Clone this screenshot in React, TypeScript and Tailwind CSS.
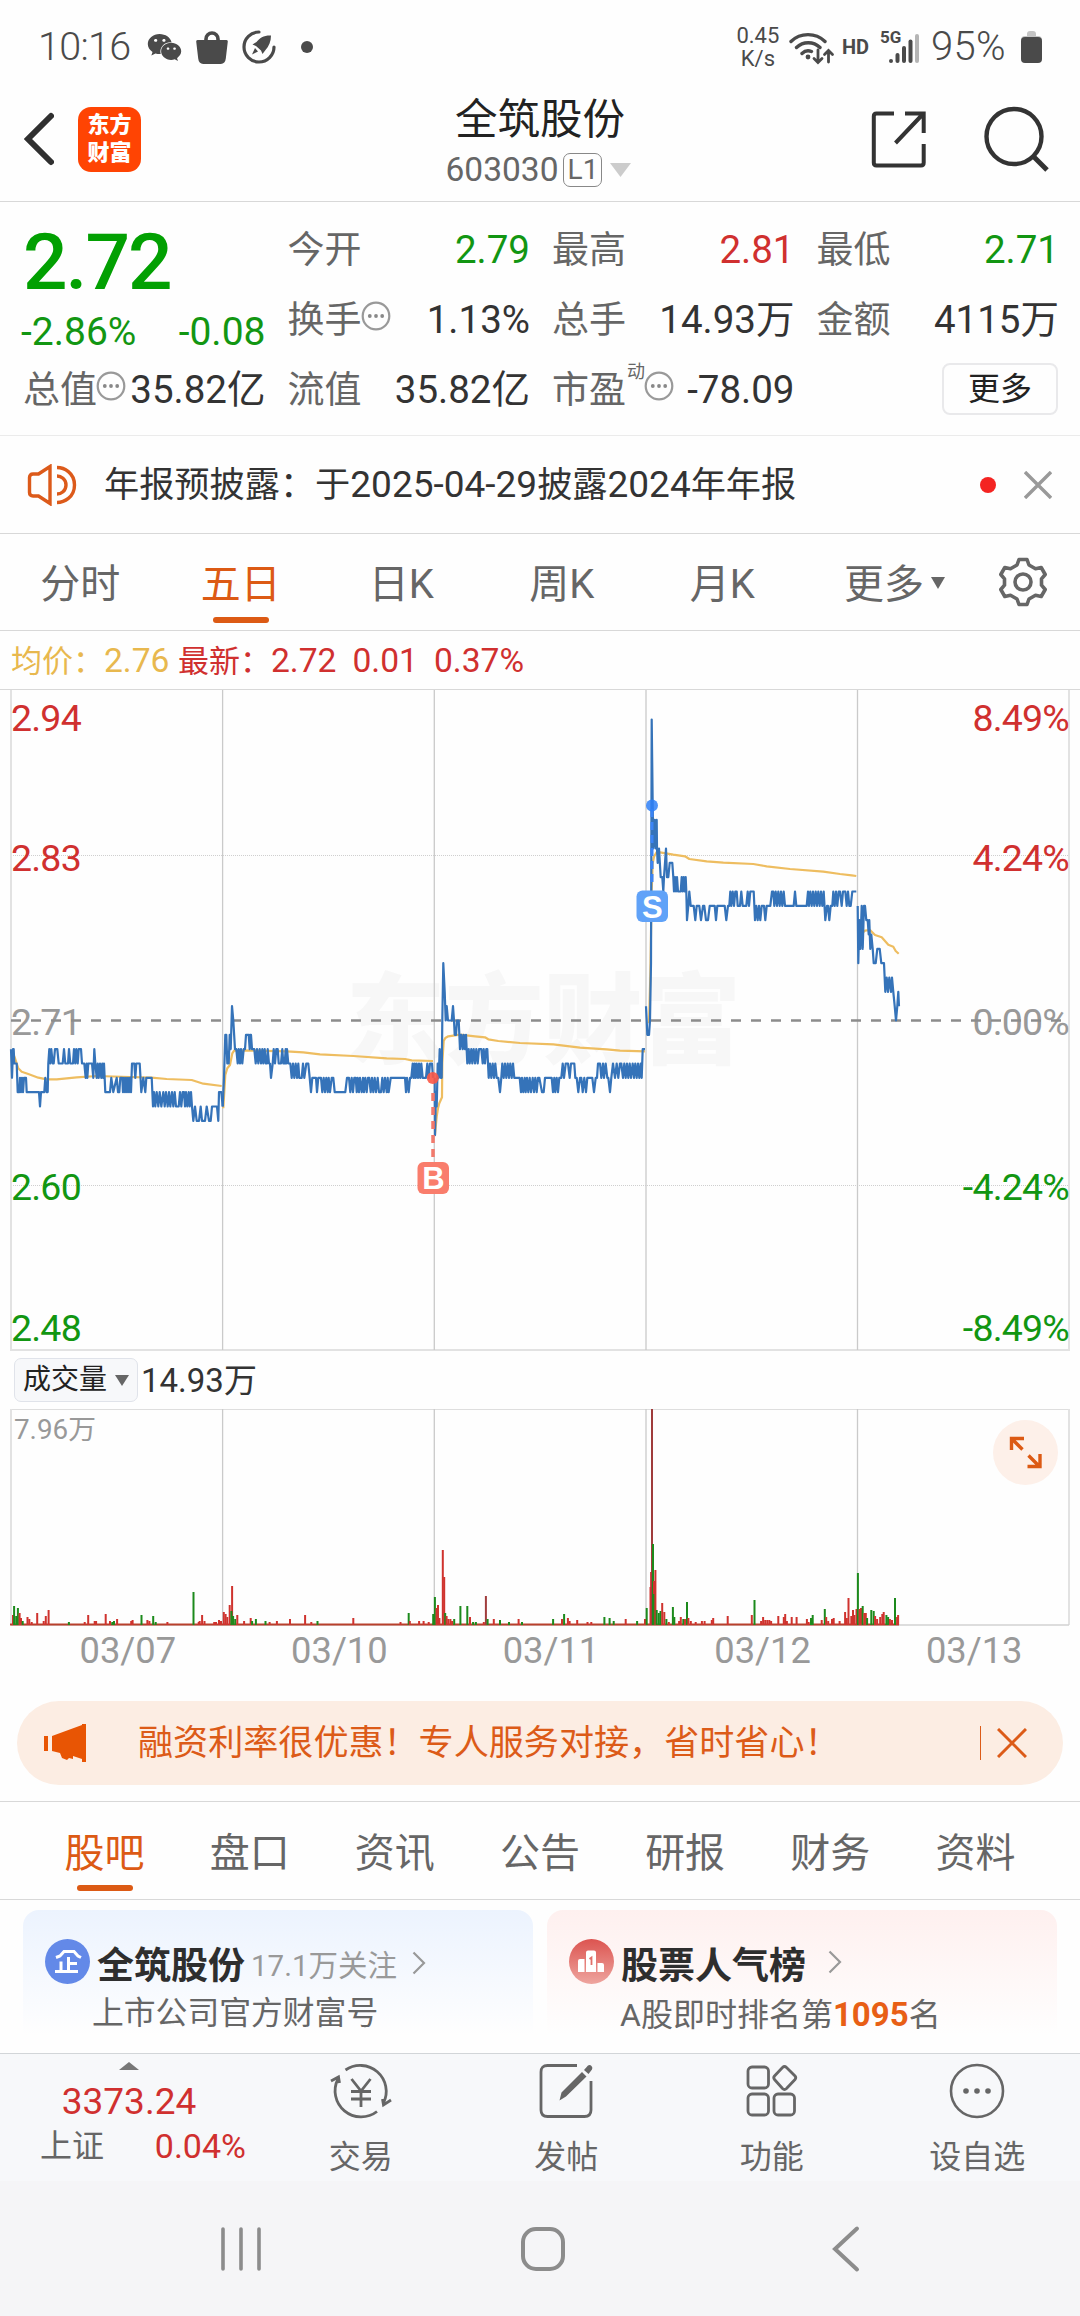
import React from 'react';
import { FaWeixin } from 'react-icons/fa';

const RED = '#d0302f';
const GREEN = '#129612';

// Price steps: pairs of "x level", x in thirds of a pixel, one level = 0.01 below 2.71
const PRICE_RUNS: { offset: number; data: string }[] = [
  {
    offset: 0,
    data: '33 2 36 4 39 2 41 2 43 3 50 3 53 5 58 5 60 4 63 5 66 4 69 5 72 4 78 4 80 5 117 5 120 6 123 5 133 5 136 4 140 5 143 5 145 3 148 2 151 3 154 2 158 3 161 3 165 2 172 2 176 3 188 3 192 2 196 3 204 3 207 2 211 3 219 3 222 2 226 3 229 2 233 3 236 2 243 2 246 3 253 3 257 4 260 3 262 4 265 3 276 3 280 4 283 2 286 3 290 4 293 3 296 4 300 3 304 4 307 3 310 4 312 3 316 5 320 5 330 5 334 4 340 5 350 4 354 5 358 5 361 4 367 4 369 5 372 4 375 5 378 4 381 5 384 4 387 5 390 4 393 5 396 3 403 3 406 4 409 3 419 3 424 5 430 4 436 5 439 4 455 4 459 6 462 5 466 6 470 5 475 6 479 5 484 6 490 5 494 6 498 5 503 6 507 5 511 6 516 5 520 6 524 5 528 6 536 6 540 5 544 6 548 5 552 5 555 6 558 5 562 6 566 5 569 6 573 5 576 6 580 7 585 6 590 7 597 7 602 6 606 7 615 7 620 6 627 7 632 7 636 6 651 6 655 7 657 5 664 5 668 6',
  },
  {
    offset: 0,
    data: '668 6 672 4 676 1 679 1 682 3 686 3 689 1 692 2 696 -1 700 0 705 2 709 2 713 3 716 2 720 3 723 2 727 3 731 2 735 2 738 1 746 1 749 2 750 1 753 1 756 2 763 2 767 3 771 2 775 3 779 2 783 3 787 2 790 3 794 2 797 3 801 3 803 2 807 3 810 3 813 4 818 3 821 2 825 3 829 2 833 2 836 3 843 3 847 2 850 3 854 3 857 2 859 3 861 2 865 3 871 3 875 4 879 3 883 4 887 3 891 4 895 3 898 4 905 4 909 3 913 4 919 3 925 3 929 4 933 5 937 4 948 4 951 5 955 4 963 4 967 5 971 4 975 5 979 4 983 5 986 4 990 5 995 4 1000 4 1004 5 1036 5 1041 4 1047 4 1051 5 1055 4 1059 5 1063 4 1067 4 1070 5 1073 4 1077 5 1080 4 1085 5 1089 4 1092 5 1096 4 1100 5 1104 4 1108 4 1112 5 1116 4 1120 5 1124 4 1128 5 1133 4 1137 5 1143 5 1147 4 1151 5 1155 4 1160 5 1163 4 1166 5 1172 4 1215 4 1218 5 1221 4 1226 5 1230 4 1234 4 1238 3 1241 4 1244 3 1247 4 1250 3 1254 4 1257 3 1261 4 1264 3 1268 4 1278 4 1282 3 1286 4 1290 3 1296 3 1299 4',
  },
  {
    offset: 1260,
    data: '44 4 45 8 48 5 50 6 53 3 56 4 59 2 62 4 65 4 67 0 70 -4 74 -2 77 0 80 -1 84 0 95 0 99 -1 102 0 104 1 108 1 111 0 116 0 120 2 124 1 128 2 131 1 135 2 138 1 142 3 146 2 149 3 154 2 157 3 161 2 165 3 169 2 173 3 177 2 184 2 188 3 191 2 195 3 199 2 202 2 206 4 210 3 214 4 218 3 222 4 226 3 230 4 235 4 240 5 244 4 247 3 251 4 255 3 259 4 263 3 267 4 271 3 275 4 279 3 283 4 299 4 303 5 306 4 310 5 314 4 317 5 321 4 325 5 329 4 333 5 338 4 342 5 346 4 350 5 354 4 358 4 366 5 371 5 375 4 395 4 399 5 403 4 406 5 410 4 414 5 418 4 424 4 428 3 432 4 437 3 444 3 449 4 453 3 463 3 466 4 470 4 475 5 480 4 484 4 488 5 493 4 498 5 502 4 517 4 522 5 527 4 531 4 534 3 540 3 544 4 549 3 552 4 557 3 562 4 565 4 570 5 574 4 579 3 585 4 590 3 595 4 600 3 604 3 609 4 613 3 617 4 621 3 625 4 629 3 633 4 638 3 642 4 646 3 650 4 654 3 658 4 662 3 665 4 668 2 675 2',
  },
  {
    offset: 1920,
    data: '18 -1 20 0 22 1 27 1 30 0 33 -4 35 -21 38 -15 40 -12 44 -14 47 -12 50 -14 51 -12 53 -11 57 -12 62 -10 67 -10 70 -9 72 -10 75 -11 78 -12 81 -10 85 -10 89 -11 97 -11 100 -10 102 -9 105 -10 108 -9 111 -10 114 -9 122 -9 125 -10 128 -9 131 -10 134 -9 137 -10 139 -9 141 -7 145 -8 148 -9 152 -8 161 -8 166 -7 170 -8 178 -8 183 -7 189 -8 193 -8 198 -7 204 -7 209 -8 224 -8 228 -7 232 -8 254 -8 259 -7 264 -8 268 -8 271 -9 274 -8 278 -9 282 -8 286 -9 290 -9 293 -8 300 -8 304 -9 308 -8 319 -8 323 -9 327 -8 331 -9 341 -9 345 -7 349 -8 353 -7 357 -8 361 -7 365 -8 372 -8 376 -7 380 -8 391 -8 396 -9 400 -9 403 -8 407 -9 411 -8 415 -9 419 -8 423 -9 427 -8 431 -9 435 -8 461 -8 465 -9 469 -8 500 -8 504 -9 507 -8 511 -9 515 -8 519 -9 523 -8 527 -9 531 -8 535 -9 539 -8 543 -9 547 -8 551 -9 556 -7 561 -8 564 -8 568 -7 572 -8 577 -8 580 -9 584 -8 588 -9 592 -8 596 -9 600 -9 605 -8 609 -9 616 -9 620 -8 624 -9 628 -8 632 -8 637 -9 649 -9',
  },
  {
    offset: 1920,
    data: '653 -8 655 -4 658 -7 661 -5 665 -8 668 -5 672 -8 675 -8 679 -7 683 -7 686 -6 688 -7 691 -5 694 -6 698 -5 701 -4 707 -4 712 -5 719 -5 724 -4 732 -4 736 -2 740 -3 744 -2 748 -3 753 -2 756 -3 760 -2 764 -1 768 0 772 -1 775 -2 777 -1',
  },
];

// Average price: pairs of "x y", both in thirds of a pixel
const AVERAGE_RUNS: { dx: number; dy: number; data: string }[] = [
  { dx: 0, dy: 271, data: '36 270 45 295 55 325 65 335 85 342 115 353 140 358 170 358 230 352 290 348 390 351 455 353 500 357 575 360 610 371 665 378' },
  { dx: 0, dy: 271, data: '670 445 676 345 682 325 690 315 697 280 703 271 860 274 910 277 960 283 1060 288 1160 295 1215 297 1235 301 1299 303' },
  { dx: 420, dy: 1, data: '45 1333 50 1280 54 1255 58 1240 66 1222 67 1120 71 1053 76 1044 85 1039 120 1034 165 1039 195 1042 205 1048 235 1053 300 1059 400 1063 480 1073 560 1078 600 1082 675 1084' },
  { dx: 640, dy: 1, data: '27 1000 31 860 35 600 38 520 42 500 50 486 60 487 100 494 135 499 148 507 200 514 250 518 340 522 380 529 450 537 550 545 600 552 635 556 649 558' },
  { dx: 640, dy: 1, data: '655 700 660 735 675 722 690 720 705 735 725 742 745 764 760 770 767 783 776 791' },
];

// Volume bars: "colour x height"
const VOLUME_BARS =
  'r13 10,g14.1 19,g16.2 9,g17.9 17,r19.6 12,r21 7,g22.7 4,r27.5 8,r29.3 6,r31.7 3,r37.2 12,r43.7 4,r45.8 9,r48.6 15,g68.9 3,r84.7 3,r88.2 10,r94.7 4,r96.1 4,r105.7 11,r110 4,g112.3 3,g114 4,r117.1 6,r131.2 4,r132.6 5,g141.5 10,r147.4 5,r149.4 4,g153.2 9,g155.7 3,r167.4 3,g193.5 33,r198.7 3,r199.7 4,r202.1 10,r204.5 4,r214.2 3,r216 3,r219 5,r221 4,r223.8 13,r225.6 11,r227.3 8,r229.7 20,r232.1 39,g231.4 14,g233.1 9,g235.2 6,r237.3 10,r244.1 4,r250.7 7,g252.1 4,g255.9 6,g265.5 4,r269.6 3,r276.9 4,r290 6,r305.1 10,r311.3 3,g317.5 4,r353.3 7,r400.5 3,g408.7 12,r409.8 4,r419.1 4,r423.6 4,r428.7 3,g433.2 11,g434.9 28,r436.6 17,r438 20,r439.4 7,r442.8 75,r444.2 48,g445.2 12,r446.6 9,r448.3 6,r450.4 6,r452.1 4,g454.2 6,g460.4 19,g467.3 19,r470 8,g473.1 3,g475.9 3,r483.8 3,d485.9 29,g487.6 6,r493.8 6,g500 5,g509 3,r518.6 6,g522 3,g553.1 6,r562 6,g564.1 11,r567.9 7,r569.6 4,r577.2 5,r587.5 3,r591.3 3,g604.4 8,g609.6 7,g613.7 4,r625.7 6,g637.1 4,r645 6,g646.7 17,r650.5 38,r651.1 53,d652 216,g653 81,r654 44,g653.8 31,r655.4 55,g656.7 15,g658.8 12,g660.5 14,r662.2 22,r664.3 13,g666.4 6,r668.8 3,g672.9 18,g674.3 8,r679.1 4,r680.8 8,g683.3 6,r685 6,g687 23,r688.4 7,r690.8 4,r695.7 3,r701.9 4,r704.6 4,r711.8 5,r713.2 7,r727.7 9,r751.8 10,g754.5 25,r761.1 4,r763.1 8,r765.2 5,r767.3 5,r769.3 5,r771.1 4,r778.3 9,r783.8 8,r785.2 11,r786.9 4,r791.7 8,r796.6 8,r806.9 6,r808.6 3,g811 7,g812.7 10,r821.7 5,g824.8 16,r826.2 8,r828.2 4,r832 6,r833.7 7,r839.6 4,r845.1 13,r846.8 7,r848.5 27,r851.3 9,r853 15,r854.4 10,r856.5 16,g857.9 52,r859.6 16,r861 17,g862.7 19,r864.4 12,r865.8 12,g867.1 7,g871.3 15,g873.7 14,r875.1 9,r877.1 6,r880.2 8,r882.3 11,r883.7 13,g886.4 10,g888.1 8,r889.9 6,r892 5,g895 27,r897.1 8,r898.1 10'
    .split(',')
    .map((item) => {
      const [x, height] = item.slice(1).split(' ').map(Number);
      return { color: item[0] === 'g' ? '#1c8a1c' : item[0] === 'd' ? '#a03c3c' : '#cf332e', x, height };
    });

const DAY_LINES = [222.6, 434.3, 646, 857.5];

const toPoints = (data: string, map: (x: number, y: number) => [number, number]) => {
  const nums = data.split(' ').map(Number);
  const out: string[] = [];
  for (let i = 0; i < nums.length; i += 2) {
    out.push(map(nums[i], nums[i + 1]).map((n) => n.toFixed(1)).join(','));
  }
  return out.join(' ');
};

const StatusBar: React.FC = () => (
  <div className="flex h-[94px] items-center pl-[38px] pr-[38px] text-[#4a4a4a]">
    <span className="w-[109px] text-[39.5px] font-light leading-none tracking-[-0.7px]">10:16</span>
    <FaWeixin className="h-[35px] w-[35px]" />
    <svg className="ml-[14px] h-[34px] w-[32px]" viewBox="0 0 32 34">
      <path d="M10 13V9a6 6 0 0 1 12 0v4" fill="none" stroke="currentColor" strokeWidth="3.6" />
      <path d="M1.500 10h29q1.500 0 1.300 1.600l-2 17q-.6 5.400-5 5.400H7.200q-4.400 0-5-5.400l-2-17Q0 10 1.500 10z" fill="currentColor" />
    </svg>
    <svg className="ml-[14px] h-[34px] w-[34px]" viewBox="0 0 34 34" fill="none" stroke="currentColor" strokeWidth="3.2" strokeLinecap="round">
      <path d="M17 2A15 15 0 1 0 32 17" />
      <path d="M29 5.500c-7-.3-11.500 2.500-14.500 6.500l-4 2.500 3.500 1.500 5 4.500 1.500 3.500 3-4c3.500-4 5.500-8.500 5.500-14.500zM13 18l-3 6.500 6-3z" fill="currentColor" stroke="none" />
    </svg>
    <span className="ml-[25px] h-3 w-3 rounded-full bg-[#4a4a4a]" />
    <div className="ml-auto flex items-center">
      <div className="flex w-[44px] flex-col items-center text-[22px] leading-[23.500px]">
        <span>0.45</span>
        <span>K/s</span>
      </div>
      <svg className="ml-[9px] h-[36px] w-[46px]" viewBox="0 0 46 36" fill="none" stroke="currentColor" strokeWidth="3.4" strokeLinecap="round">
        <path d="M2 12.500A24.500 24.500 0 0 1 36 12.500M7.500 18.500a17 17 0 0 1 23.500 0M13 24.500a9 9 0 0 1 9.500-2" />
        <circle cx="19" cy="28" r="2.400" fill="currentColor" stroke="none" />
        <path d="M29 21v12M25 29.500l4 4 4-4M39.500 33V21.500M35.500 25.500l4-4 4 4" strokeWidth="2.800" />
      </svg>
      <span className="ml-[7px] text-[20px] font-bold leading-none">HD</span>
      <div className="ml-[11px] flex items-end">
        <span className="relative -top-[18px] w-[8px] text-[17px] font-bold leading-none">5G</span>
        <svg className="h-[34px] w-[32px]" viewBox="8 0 32 34">
          <rect x="9" y="29" width="4" height="4" rx="2" fill="currentColor" />
          <rect x="15.500" y="23" width="4" height="10" rx="2" fill="currentColor" />
          <rect x="22" y="16" width="4" height="17" rx="2" fill="currentColor" />
          <rect x="28.500" y="9.500" width="4" height="23.500" rx="2" fill="currentColor" />
          <rect x="35" y="4" width="4" height="29" rx="2" fill="#b5b5b5" />
        </svg>
      </div>
      <span className="ml-[11px] w-[90px] text-[40px] font-light leading-none tracking-[0.3px]">95%</span>
      <svg className="h-[32px] w-[21px]" viewBox="0 0 21 32">
        <path d="M6 5V3q0-3 3-3h3q3 0 3 3v2h2q4 0 4 4H0q0-4 4-4z" fill="#c4c4c4" />
        <rect y="6" width="21" height="26" rx="4" fill="currentColor" />
      </svg>
    </div>
  </div>
);

const Header: React.FC = () => (
  <header className="grid h-[108px] grid-cols-[1fr_auto_1fr] border-b border-[#d8d8d8]">
    <div className="flex items-center pb-[17px] pl-[24px]">
      <svg className="h-[54px] w-[30px]" viewBox="0 0 30 54" fill="none" stroke="#303030" strokeWidth="6" strokeLinecap="round">
        <path d="M27 4L4 27l23 23" />
      </svg>
      <div className="ml-[24px] flex h-[65px] w-[63px] flex-col items-center justify-center rounded-[13px] bg-[#ff4403] text-[22px] font-black leading-[28px] text-white">
        <span>东方</span>
        <span>财富</span>
      </div>
    </div>
    <div className="flex flex-col items-center pt-px">
      <h1 className="text-[42.5px] leading-[50px] text-[#222]">全筑股份</h1>
      <div className="mt-[8px] flex items-center text-[#666]">
        <span className="text-[33.5px] leading-[34px]">603030</span>
        <span className="ml-[5px] flex h-[34px] w-[39px] items-center justify-center rounded-[7px] border border-[#888] text-[28px] leading-none">L1</span>
        <svg className="ml-[8px] mr-[3px] h-[14px] w-[21px]" viewBox="0 0 21 14">
          <path d="M0 0h21L10.500 14z" fill="#ccc" />
        </svg>
      </div>
    </div>
    <div className="flex items-center justify-end pb-[18px] pr-[31px]">
      <svg className="h-[58px] w-[56px]" viewBox="0 0 56 58" fill="none" stroke="#333" strokeWidth="4">
        <path d="M23 3.500H5.500q-2.700 0-2.700 2.700v46.500q0 2.700 2.700 2.700H50q2.700 0 2.700-2.700V34M34 3.500h18.700V23M52 4L24.500 33" />
      </svg>
      <svg className="ml-[56px] h-[66px] w-[66px]" viewBox="0 0 66 66" fill="none" stroke="#333" strokeWidth="4.400">
        <circle cx="31" cy="30.500" r="27.500" />
        <path d="M51 51l13 13" strokeWidth="5" />
      </svg>
    </div>
  </header>
);

const InfoIcon: React.FC = () => (
  <svg className="relative -top-[4px] -ml-px h-[30px] w-[30px] shrink-0" viewBox="0 0 30 30">
    <circle cx="15" cy="15" r="13.300" fill="none" stroke="#999" strokeWidth="2.200" />
    <g fill="#888">
      <circle cx="8.800" cy="15" r="1.900" />
      <circle cx="15" cy="15" r="1.900" />
      <circle cx="21.200" cy="15" r="1.900" />
    </g>
  </svg>
);

interface StatProps {
  label: string;
  value?: string;
  valueClass?: string;
  sup?: string;
  info?: boolean;
}

const Stat: React.FC<StatProps> = ({ label, value, valueClass = 'text-[#333]', sup, info }) => (
  <div className="flex h-[70px] items-center whitespace-nowrap leading-none">
    <span className="text-[37px] text-[#666]">{label}</span>
    {sup && <span className="relative -top-[18px] ml-px text-[18px] text-[#666]">{sup}</span>}
    {info && <InfoIcon />}
    <span className={`-mr-[2px] ml-auto text-[38.5px] ${valueClass}`}>{value}</span>
  </div>
);

const Quote: React.FC = () => (
  <section className="grid h-[234px] grid-cols-4 gap-x-6 border-b border-[#ebebeb] pl-[23px] pr-[23px] pt-[13px]">
    <div>
      <div className="flex h-[94px] items-center text-[78.5px] font-medium leading-none tracking-[-2px] text-[#02a002]">2.72</div>
      <div className="-ml-[2px] -mr-[2px] flex h-[46px] items-center justify-between text-[39px] leading-none text-[#129612]">
        <span>-2.86%</span>
        <span>-0.08</span>
      </div>
      <Stat label="总值" value="35.82亿" info />
    </div>
    <div>
      <Stat label="今开" value="2.79" valueClass="text-[#129612]" />
      <Stat label="换手" value="1.13%" info />
      <Stat label="流值" value="35.82亿" />
    </div>
    <div>
      <Stat label="最高" value="2.81" valueClass="text-[#d0302f]" />
      <Stat label="总手" value="14.93万" />
      <Stat label="市盈" value="-78.09" sup="动" info />
    </div>
    <div>
      <Stat label="最低" value="2.71" valueClass="text-[#129612]" />
      <Stat label="金额" value="4115万" />
      <div className="flex h-[70px] items-center justify-end pb-[3px]">
        <button className="-mr-px flex h-[52px] w-[116px] items-center justify-center rounded-lg border-2 border-[#e9e9eb] text-[32px] leading-none text-[#222]">更多</button>
      </div>
    </div>
  </section>
);

const Notice: React.FC = () => (
  <section className="flex h-[98px] items-center border-b border-[#d8d8d8] pl-[27px] pr-[28px]">
    <svg className="h-[42px] w-[50px]" viewBox="0 0 50 42" fill="none" stroke="#dc5a1a" strokeWidth="3.400">
      <path d="M2.500 13.500q0-3.500 3.500-3.500h5.500L23 2.500v37L11.500 32H6q-3.500 0-3.500-3.500z" />
      <path d="M30 3.500c7 0 17.500 5 17.500 17.500S37 38.500 30 38.500M30 12c4 0 9 3 9 9s-5 9-9 9" />
    </svg>
    <p className="ml-[27px] text-[35.200px] leading-none text-[#333]">
      年报预披露：于<span className="text-[37px]">2025-04-29</span>披露<span className="text-[37px]">2024</span>年年报
    </p>
    <span className="ml-auto h-4 w-4 rounded-full bg-[#f42422]" />
    <svg className="ml-[28px] h-[28px] w-[28px]" viewBox="0 0 28 28" stroke="#999" strokeWidth="3.400">
      <path d="M1 1l26 26M27 1L1 27" />
    </svg>
  </section>
);

const PeriodTabs: React.FC = () => (
  <nav className="flex h-[97px] border-b border-[#d8d8d8] text-[40px] leading-none text-[#666]">
    {['分时', '五日', '日K', '周K', '月K'].map((tab) => (
      <div key={tab} className={`flex w-[160.500px] flex-col items-center pt-[31px] ${tab === '五日' ? 'text-[#dc5a14]' : ''}`}>
        <span>{tab}</span>
        {tab === '五日' && <span className="mt-[12px] h-[6px] w-[56px] rounded-full bg-[#dc5a14]" />}
      </div>
    ))}
    <div className="flex w-[184px] justify-center pt-[31px]">
      <span>更多</span>
      <svg className="ml-[7px] mt-[12px] h-[12px] w-[14px]" viewBox="0 0 14 12">
        <path d="M0 0h14L7 12z" fill="#666" />
      </svg>
    </div>
    <svg className="ml-[11px] mt-[23px] h-[50px] w-[50px]" viewBox="0 0 50 50" fill="none" stroke="#666" strokeWidth="3.600" strokeLinejoin="round">
      <path d="M21 2.500h8l2 5.500 6.500 3.700 5.700-1.200 4 7-3.700 4.300v6.400l3.700 4.300-4 7-5.700-1.200L31 42l-2 5.500h-8L19 42l-6.500-3.700-5.700 1.200-4-7 3.700-4.300v-6.400l-3.700-4.300 4-7 5.700 1.200L19 8z" />
      <circle cx="25" cy="25" r="8" />
    </svg>
  </nav>
);

const Legend: React.FC = () => (
  <div className="flex h-[58px] items-center pl-[11px] pt-[2px] leading-none">
    <span className="text-[31px] text-[#e8b84e]">均价：</span>
    <span className="w-[74px] text-[33.600px] text-[#e8b84e]">2.76</span>
    <span className="text-[31px] text-[#d0302f]">最新：</span>
    <span className="flex gap-[16px] text-[33.600px] text-[#d0302f]">
      <span>2.72</span>
      <span>0.01</span>
      <span>0.37%</span>
    </span>
  </div>
);

const PriceChart: React.FC = () => (
  <svg className="block h-[662px] w-[1080px]" viewBox="0 0 1080 662">
    <text x="346" y="367" fontSize="99" fontWeight="900" textLength="395" fill="#f7f7f7">东方财富</text>
    <path d="M0 .5h1080" stroke="#d8d8d8" />
    <path d="M11 166.500h1058M11 496.500h1058" stroke="#cfcfcf" strokeDasharray="1 1" />
    <path d="M11 1v660h1058V1" fill="none" stroke="#e2e2e2" strokeWidth="2" />
    {DAY_LINES.map((x) => (
      <path key={x} d={`M${x} 1v660`} stroke="#cacaca" strokeWidth="1.300" />
    ))}

    <g fontSize="37.500" letterSpacing="-0.8">
      <text x="11" y="42" fill={RED}>2.94</text>
      <text x="11" y="182" fill={RED}>2.83</text>
      <text x="11" y="346" fill="#999">2.71</text>
      <text x="11" y="511" fill={GREEN}>2.60</text>
      <text x="11" y="652" fill={GREEN}>2.48</text>
      <g textAnchor="end">
        <text x="1069" y="42" fill={RED}>8.49%</text>
        <text x="1069" y="182" fill={RED}>4.24%</text>
        <text x="1069" y="346" fill="#999">0.00%</text>
        <text x="1069" y="511" fill={GREEN}>-4.24%</text>
        <text x="1069" y="652" fill={GREEN}>-8.49%</text>
      </g>
    </g>
    <path d="M11 331.500h1058" stroke="#8c8c8c" strokeWidth="2.400" strokeDasharray="10 10" />

    <g fill="none" strokeLinejoin="round">
      {AVERAGE_RUNS.map((run) => (
        <polyline key={run.data} points={toPoints(run.data, (x, y) => [run.dx + x / 3, run.dy + y / 3])} stroke="#eebd60" strokeWidth="2.200" />
      ))}
      {PRICE_RUNS.map((run) => (
        <polyline key={run.data} points={toPoints(run.data, (x, k) => [(run.offset + x) / 3, 331.5 + k * 14.33])} stroke="#3573b9" strokeWidth="2.200" />
      ))}
    </g>

    <g fontFamily="Liberation Sans" fontSize="31" fontWeight="700" textAnchor="middle">
      <path d="M433 404v66" stroke="#f27a6c" strokeWidth="3.500" strokeDasharray="8 6" />
      <circle cx="432.800" cy="389" r="6" fill="#fb5646" fillOpacity="0.9" />
      <rect x="417.500" y="473" width="31.500" height="32" rx="6" fill="#f97d6c" />
      <text x="433.500" y="500" fill="#fff">B</text>
      <path d="M652 120v78" stroke="#3b84f5" strokeWidth="3" strokeDasharray="8 5" />
      <circle cx="652" cy="116.500" r="6" fill="#2f80f7" fillOpacity="0.85" />
      <rect x="636.500" y="201.500" width="31.500" height="31.500" rx="6" fill="#60a2f8" />
      <text x="652.300" y="228.500" fill="#fff">S</text>
    </g>
  </svg>
);

const VolumeHeader: React.FC = () => (
  <div className="flex h-[58px] items-center pl-[14px] leading-none">
    <button className="flex h-[44px] w-[124px] items-center rounded-[7px] border border-[#e0e3ea] bg-[#f7f8fa] pl-[8px] text-[28px] text-[#222]">
      成交量
      <svg className="ml-[8px] h-[11px] w-[14px]" viewBox="0 0 14 11">
        <path d="M0 0h14L7 11z" fill="#666" />
      </svg>
    </button>
    <span className="ml-[3px] text-[33px] text-[#333]">14.93万</span>
  </div>
);

const VolumeChart: React.FC = () => (
  <>
    <svg className="block h-[218px] w-[1080px]" viewBox="0 0 1080 218">
      <path d="M11 .5h1058" stroke="#dedede" />
      <path d="M11 0v216M1069 0v216" stroke="#e2e2e2" strokeWidth="2" />
      <path d="M11 216h1058" stroke="#d2d2d2" strokeWidth="1.600" />
      {DAY_LINES.map((x) => (
        <path key={x} d={`M${x} 0v216`} stroke="#cacaca" strokeWidth="1.300" />
      ))}
      <text x="14" y="30" fontSize="27.800" fill="#999">7.96万</text>
      <path d="M10 215.500h889" stroke="#b8402c" strokeWidth="2" />
      {VOLUME_BARS.map((bar, i) => (
        <rect key={i} x={bar.x - 1} y={216 - bar.height} width="2" height={bar.height} fill={bar.color} />
      ))}
      <circle cx="1025.500" cy="43.500" r="32.500" fill="#fdf0e9" />
      <path d="M1022.500 40.500l-11-11M1011.500 41V29.500h12.500M1028.500 46.500l11 11M1027.500 57.500h12.500V45" fill="none" stroke="#dc5a14" strokeWidth="3.400" />
    </svg>
    <div className="flex h-[49px] items-center pl-[22px] text-[36.300px] leading-none text-[#999]">
      {['03/07', '03/10', '03/11', '03/12', '03/13'].map((day) => (
        <span key={day} className="w-[211.700px] text-center">{day}</span>
      ))}
    </div>
  </>
);

const PromoBanner: React.FC = () => (
  <div className="mx-[17px] mt-[25px] flex h-[84px] items-center rounded-full bg-[#fcede3] pl-[27px] pr-[36px]">
    <svg className="h-[38px] w-[44px]" viewBox="0 0 44 38" fill="#e85504">
      <path d="M0 12h4v15H0zM8 12L38 1V0h4v38h-4v-3l-9-3v3l-4-1-2 2-5-2-2-5-8-2z" />
    </svg>
    <p className="ml-[50px] mt-[2px] text-[35.100px] leading-none text-[#dc5b18]">融资利率很优惠！专人服务对接，省时省心！</p>
    <span className="ml-auto h-[34px] w-px bg-[#dc5b18]" />
    <svg className="ml-[16px] h-[30px] w-[30px]" viewBox="0 0 30 30" stroke="#dc5b18" strokeWidth="3">
      <path d="M1 1l28 28M29 1L1 29" />
    </svg>
  </div>
);

const ContentTabs: React.FC = () => (
  <nav className="mt-[16px] flex h-[99px] border-b border-t border-[#d8d8d8] px-[32px] text-[40px] leading-none text-[#666]">
    {['股吧', '盘口', '资讯', '公告', '研报', '财务', '资料'].map((tab) => (
      <div key={tab} className={`flex flex-1 flex-col items-center pt-[32px] ${tab === '股吧' ? 'text-[#dc5a14]' : ''}`}>
        <span>{tab}</span>
        {tab === '股吧' && <span className="mt-[11px] h-[6px] w-[56px] rounded-full bg-[#dc5a14]" />}
      </div>
    ))}
  </nav>
);

const Chevron: React.FC<{ className?: string }> = ({ className = '' }) => (
  <svg className={`h-[24px] w-[14px] ${className}`} viewBox="0 0 14 24" fill="none" stroke="#999" strokeWidth="2.200">
    <path d="M1.500 1.500L12 12 1.500 22.500" />
  </svg>
);

const Cards: React.FC = () => (
  <section className="flex h-[153px] gap-[14px] overflow-hidden px-[23px] pt-[10px] leading-none">
    <div className="h-[125px] flex-1 rounded-t-2xl bg-gradient-to-b from-[#ecf3fe] to-[#fefefe] pl-[22px] pt-[28px]">
      <div className="flex items-center">
        <svg className="h-[45px] w-[45px]" viewBox="0 0 45 45">
          <circle cx="22.500" cy="22.500" r="22.500" fill="#6389e8" />
          <g fill="none" stroke="#fff" strokeWidth="3">
            <path d="M11 18.500l4-1.500 4-4.500h10l4 4.500 3 1.500M23.500 18v13.500M16 22.500v9M10 32.500h23M24 24.500h8" />
          </g>
        </svg>
        <span className="ml-[7px] mt-[10px] text-[37px] font-bold text-[#2e2e2e]">全筑股份</span>
        <span className="ml-[6px] mt-[11px] text-[29.500px] text-[#999]">17.1万关注</span>
        <Chevron className="ml-[15px] mt-[2px]" />
      </div>
      <div className="ml-[47px] mt-[13px] text-[31.800px] text-[#666]">上市公司官方财富号</div>
    </div>
    <div className="h-[125px] flex-1 rounded-t-2xl bg-gradient-to-b from-[#fef0ef] to-[#fefefe] pl-[22px] pt-[28px]">
      <div className="flex items-center">
        <svg className="h-[45px] w-[45px]" viewBox="0 0 45 45">
          <defs>
            <linearGradient id="rank" x1="0" y1="0" x2="0" y2="1">
              <stop offset="0" stopColor="#dc5450" />
              <stop offset="1" stopColor="#eea59f" />
            </linearGradient>
          </defs>
          <circle cx="22.500" cy="22.500" r="22.500" fill="url(#rank)" />
          <path d="M17 33V13.500q0-2 2-2h6q2 0 2 2V33zM9 33V22q0-2 2-2h4.500v13zM28.500 33V24H33q2 0 2 2v7z" fill="#fff" />
          <path d="M20.500 20l2-1.500V26" fill="none" stroke="#e0706a" strokeWidth="1.800" />
        </svg>
        <span className="ml-[7px] mt-[10px] text-[37px] font-bold text-[#2e2e2e]">股票人气榜</span>
        <Chevron className="ml-[22px] mt-px" />
      </div>
      <div className="ml-[51px] mt-[13px] text-[32px] text-[#666]">
        A股即时排名第<b className="text-[33px] leading-none text-[#e85f15]">1095</b>名
      </div>
    </div>
  </section>
);

const TradeIcon = () => (
  <svg className="h-[58px] w-[62px]" viewBox="0 0 62 58" fill="none" stroke="#666" strokeWidth="2.800">
    <path d="M15.500 8A26 26 0 0 1 53.500 41M47 49.500A26 26 0 0 1 8 17M1 19l7.500-4 1 6M61 38l-7.500 5-1-6" />
    <path d="M21.500 17L31 29l9.500-12M31 29v16M21 29.500h20M21 37h20" />
  </svg>
);

const PostIcon = () => (
  <svg className="h-[58px] w-[62px]" viewBox="0 0 62 58" fill="none" stroke="#666" strokeWidth="2.800">
    <path d="M42 3.500H12.500Q6 3.500 6 10v38q0 6.500 6.500 6.500h37q6.500 0 6.500-6.500V19" />
    <path d="M24.500 38.500l2-8L47 10l4.500 4.500L31 34.500zM49 8l4-4.500q2-1 3.500.5t.5 3.500L53.500 12z" fill="#666" stroke="none" />
  </svg>
);

const GridIcon = () => (
  <svg className="h-[58px] w-[62px]" viewBox="0 0 62 58" fill="none" stroke="#666" strokeWidth="2.800">
    <rect x="7" y="5" width="20.500" height="21" rx="4" />
    <rect x="7" y="32" width="20.500" height="21" rx="4" />
    <rect x="33" y="32" width="20.500" height="21" rx="4" />
    <path d="M41.500 5.500q2-2 4 0L54 14q1.500 1.800 0 3.500l-8.500 9q-2 2-4 0l-8-9q-1.500-1.700 0-3.500z" />
  </svg>
);

const MoreIcon = () => (
  <svg className="h-[58px] w-[62px]" viewBox="0 0 62 58">
    <circle cx="31" cy="29" r="26" fill="none" stroke="#666" strokeWidth="2.600" />
    <g fill="#666">
      <circle cx="20" cy="29" r="2.800" />
      <circle cx="31" cy="29" r="2.800" />
      <circle cx="42" cy="29" r="2.800" />
    </g>
  </svg>
);

const ACTIONS = [
  { label: '交易', Icon: TradeIcon },
  { label: '发帖', Icon: PostIcon },
  { label: '功能', Icon: GridIcon },
  { label: '设自选', Icon: MoreIcon },
];

const BottomBar: React.FC = () => (
  <footer className="flex h-[128px] border-t border-[#d2d5d8] bg-[#f7f8fa] leading-none">
    <div className="flex w-[258px] flex-col items-center">
      <svg className="mt-[8px] h-[8px] w-[20px]" viewBox="0 0 20 8">
        <path d="M10 0l10 8H0z" fill="#777" />
      </svg>
      <span className="mt-[13px] text-[37px] text-[#d0302f]">3373.24</span>
      <div className="mt-[8px] flex w-full items-center justify-between pl-[40px] pr-[12px] pt-px">
        <span className="text-[32px] text-[#666]">上证</span>
        <span className="text-[34px] text-[#d0302f]">0.04%</span>
      </div>
    </div>
    {ACTIONS.map(({ label, Icon }) => (
      <div key={label} className="flex flex-1 flex-col items-center pt-[8px]">
        <Icon />
        <span className="mt-[21px] text-[32px] text-[#666]">{label}</span>
      </div>
    ))}
  </footer>
);

const SystemNav: React.FC = () => (
  <div className="flex h-[135px] items-center bg-[#f5f5f7] pl-[219px]">
    <svg className="h-[48px] w-[44px]" viewBox="0 0 44 48" fill="none" stroke="#8c8c8c" strokeWidth="3.600" strokeLinecap="round">
      <path d="M4 4v40M22 4v40M40 4v40" />
    </svg>
    <svg className="ml-[257px] h-[48px] w-[46px]" viewBox="0 0 46 48" fill="none" stroke="#8c8c8c" strokeWidth="4">
      <rect x="3" y="4" width="40" height="40" rx="13" />
    </svg>
    <svg className="ml-[265px] h-[48px] w-[30px]" viewBox="0 0 30 48" fill="none" stroke="#8c8c8c" strokeWidth="4" strokeLinecap="round">
      <path d="M26 3.500L4 24l22 20.500" />
    </svg>
  </div>
);

export default function App() {
  return (
    <div className="h-[2316px] w-[1080px] overflow-hidden bg-[#fefefe] font-[Roboto,'Noto_Sans_CJK_SC',sans-serif]">
      <StatusBar />
      <Header />
      <Quote />
      <Notice />
      <PeriodTabs />
      <Legend />
      <PriceChart />
      <VolumeHeader />
      <VolumeChart />
      <PromoBanner />
      <ContentTabs />
      <Cards />
      <BottomBar />
      <SystemNav />
    </div>
  );
}
